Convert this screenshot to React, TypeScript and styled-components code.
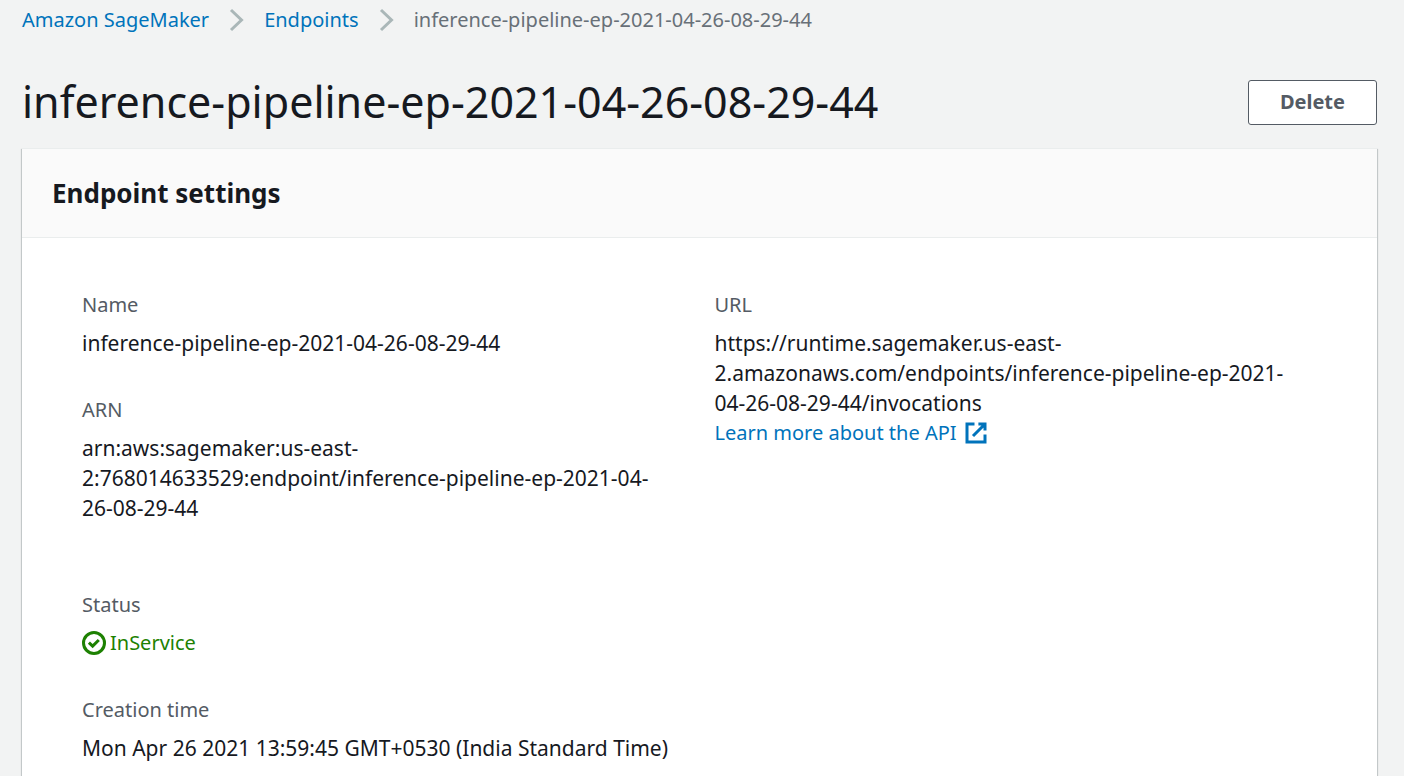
import React from "react";
import styled, { createGlobalStyle } from "styled-components";

const Global = createGlobalStyle`
  * { box-sizing: border-box; }
  body {
    margin: 0;
    background: #f2f3f3;
    color: #16191f;
    font: 20px/30px "Noto Sans", "Open Sans", sans-serif;
  }
  h1, h2, dl, dd, ol { margin: 0; padding: 0; }
`;

const Page = styled.main`
  min-height: 100vh;
  display: flex;
  flex-direction: column;
  padding: 5px 27px 0 22px;
`;

const Crumbs = styled.ol`
  display: flex;
  align-items: center;
  list-style: none;
  color: #687078;
`;

const Crumb = styled.li`
  display: flex;
  align-items: center;
`;

const Chevron = styled.svg`
  width: 15px;
  height: 24px;
  margin: 0 20px;
  fill: none;
  stroke: #aab7b8;
  stroke-width: 3;
`;

const Link = styled.a`
  color: #0073bb;
  text-decoration: none;
`;

const TitleRow = styled.header`
  display: flex;
  justify-content: space-between;
  align-items: center;
  padding: 39px 0 18px;
`;

const Title = styled.h1`
  font-size: 43px;
  line-height: 56px;
  font-weight: 400;
`;

const Button = styled.button`
  height: 45px;
  padding: 0 31px;
  font: 700 20px/30px "Noto Sans", "Open Sans", sans-serif;
  color: #545b64;
  background: #fff;
  border: 1px solid #545b64;
  border-radius: 3px;
`;

const Panel = styled.section`
  flex: 1;
  background: #fff;
  border-top: 1px solid #eaeded;
  box-shadow:
    0 1px 1px 0 rgba(0, 28, 36, 0.3),
    1px 1px 1px 0 rgba(0, 28, 36, 0.15),
    -1px 1px 1px 0 rgba(0, 28, 36, 0.15);
`;

const PanelHeader = styled.div`
  padding: 24px 30px;
  background: #fafafa;
  border-bottom: 1px solid #eaeded;
`;

const PanelTitle = styled.h2`
  font-size: 26px;
  line-height: 40px;
  font-weight: 700;
`;

const Columns = styled.div`
  display: grid;
  grid-template-columns: 1fr 1fr;
  gap: 67px 30px;
  padding: 52px 60px 0;
`;

const Fields = styled.dl`
  display: flex;
  flex-direction: column;
  gap: 37px;
`;

const Label = styled.dt`
  margin-bottom: 8px;
  color: #545b64;
`;

const Value = styled.dd`
  font-size: 21px;
`;

const IconText = styled.span<{ $gap: number }>`
  display: flex;
  align-items: center;
  gap: ${(p) => p.$gap}px;
  font-size: 20px;
`;

const Status = styled(IconText)`
  color: #1d8102;
`;

const Icon = styled.svg`
  width: 24px;
  height: 24px;
  fill: none;
  stroke: currentColor;
  stroke-width: 2;
`;

function Separator() {
  return (
    <Chevron viewBox="0 0 15 24" aria-hidden="true">
      <path d="M2 2l10.5 10L2 22" />
    </Chevron>
  );
}

function Field({ label, children }: { label: string; children: React.ReactNode }) {
  return (
    <div>
      <Label>{label}</Label>
      <Value>{children}</Value>
    </div>
  );
}

export default function App() {
  return (
    <>
      <Global />
      <Page>
        <nav aria-label="Breadcrumb">
          <Crumbs>
            <Crumb>
              <Link href="#sagemaker">Amazon SageMaker</Link>
              <Separator />
            </Crumb>
            <Crumb>
              <Link href="#endpoints">Endpoints</Link>
              <Separator />
            </Crumb>
            <Crumb aria-current="page">inference-pipeline-ep-2021-04-26-08-29-44</Crumb>
          </Crumbs>
        </nav>
        <TitleRow>
          <Title>inference-pipeline-ep-2021-04-26-08-29-44</Title>
          <Button type="button">Delete</Button>
        </TitleRow>
        <Panel>
          <PanelHeader>
            <PanelTitle>Endpoint settings</PanelTitle>
          </PanelHeader>
          <Columns>
            <Fields>
              <Field label="Name">inference-pipeline-ep-2021-04-26-08-29-44</Field>
              <Field label="ARN">
                arn:aws:sagemaker:us-east-
                <br />
                2:768014633529:endpoint/inference-pipeline-ep-2021-04-
                <br />
                26-08-29-44
              </Field>
            </Fields>
            <Fields>
              <Field label="URL">
                https://runtime.sagemaker.us-east-
                <br />
                2.amazonaws.com/endpoints/inference-pipeline-ep-2021-
                <br />
                04-26-08-29-44/invocations
                <br />
                <Link href="#api">
                  <IconText $gap={7}>
                    Learn more about the API
                    <Icon viewBox="0 0 16 16" aria-hidden="true">
                      <path d="M9.6 2H14v4.4M6 10l8-8M14 9.05V14H2V2h5" />
                    </Icon>
                  </IconText>
                </Link>
              </Field>
            </Fields>
            <Fields>
              <Field label="Status">
                <Status $gap={4}>
                  <Icon viewBox="0 0 16 16" aria-hidden="true">
                    <circle cx="8" cy="8" r="7" />
                    <path d="M4.6 7.7L7.1 10.1l4.1-4.1" />
                  </Icon>
                  InService
                </Status>
              </Field>
              <Field label="Creation time">
                Mon Apr 26 2021 13:59:45 GMT+0530 (India Standard Time)
              </Field>
            </Fields>
          </Columns>
        </Panel>
      </Page>
    </>
  );
}
